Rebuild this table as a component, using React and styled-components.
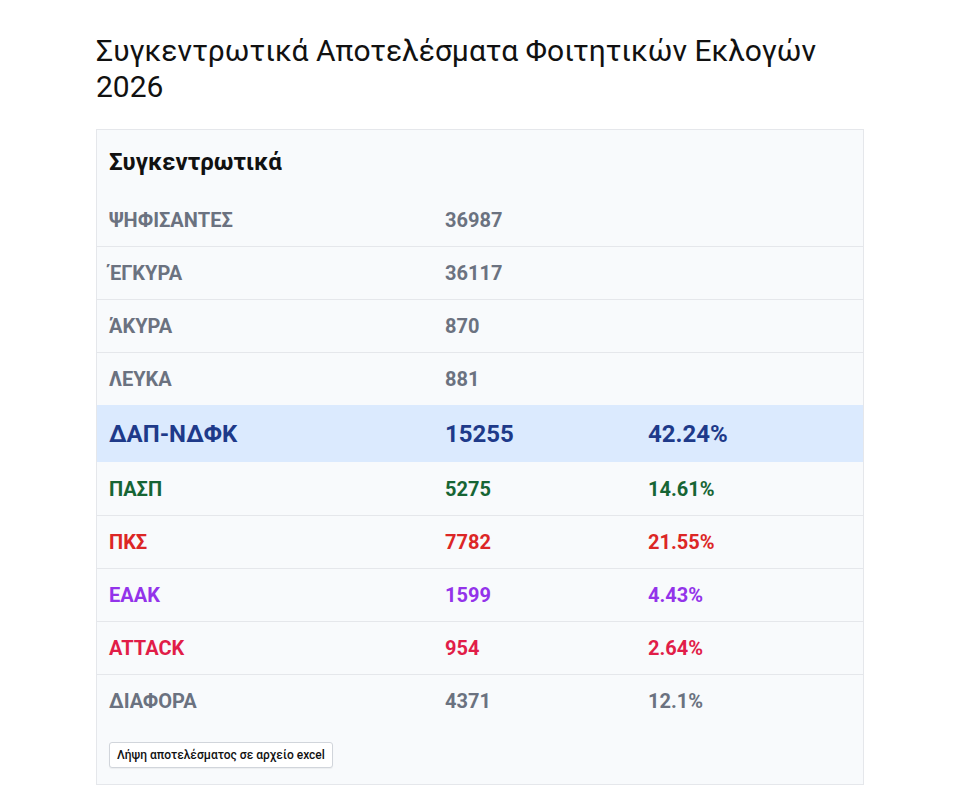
import React from "react";
import styled, { createGlobalStyle } from "styled-components";

const GlobalStyle = createGlobalStyle`
  body {
    margin: 0;
    background: #ffffff;
    font-family: Roboto, "Noto Sans", sans-serif;
    color: #111827;
  }
`;

const Page = styled.main`
  width: 768px;
  margin: 0 0 0 96px;
  padding-top: 33px;
`;

const Title = styled.h1`
  margin: 0 0 24px;
  font-size: 30px;
  line-height: 36px;
  font-weight: 400;
  color: #111;
`;

const Panel = styled.section`
  background: #f8fafc;
  border: 1px solid #e5e7eb;
`;

const PanelHeading = styled.h2`
  margin: 0;
  height: 63px;
  display: flex;
  align-items: center;
  padding: 0 12px;
  font-size: 24px;
  font-weight: 700;
  color: #111;
`;

const Row = styled.div`
  display: grid;
  grid-template-columns: 336px 203px 1fr;
  align-items: center;
  height: ${(p) => (p.$big ? 57 : 53)}px;
  padding: 0 12px;
  border-top: ${(p) => (p.$first || p.$big || p.$afterBig ? "none" : "1px solid #e5e7eb")};
  background: ${(p) => (p.$big ? "#dbeafe" : "transparent")};
  color: ${(p) => p.$color};
  font-size: ${(p) => (p.$big ? 24 : 20)}px;
  font-weight: 700;
  box-sizing: border-box;
`;

const Cell = styled.span``;

const Footer = styled.div`
  padding: 15px 12px 16px;
`;

const Button = styled.button`
  font-family: Roboto, sans-serif;
  font-size: 12px;
  font-weight: 500;
  color: #111;
  background: #fff;
  border: 1px solid #d1d5db;
  border-radius: 3px;
  padding: 5px 7px;
  box-shadow: 0 1px 1px rgba(0, 0, 0, 0.05);
`;

const rows = [
  { label: "ΨΗΦΙΣΑΝΤΕΣ", votes: "36987", pct: "", color: "#6b7280" },
  { label: "ΈΓΚΥΡΑ", votes: "36117", pct: "", color: "#6b7280" },
  { label: "ΆΚΥΡΑ", votes: "870", pct: "", color: "#6b7280" },
  { label: "ΛΕΥΚΑ", votes: "881", pct: "", color: "#6b7280" },
  { label: "ΔΑΠ-ΝΔΦΚ", votes: "15255", pct: "42.24%", color: "#1e3a8a", big: true },
  { label: "ΠΑΣΠ", votes: "5275", pct: "14.61%", color: "#166534" },
  { label: "ΠΚΣ", votes: "7782", pct: "21.55%", color: "#dc2626" },
  { label: "ΕΑΑΚ", votes: "1599", pct: "4.43%", color: "#9333ea" },
  { label: "ATTACK", votes: "954", pct: "2.64%", color: "#e11d48" },
  { label: "ΔΙΑΦΟΡΑ", votes: "4371", pct: "12.1%", color: "#6b7280" },
];

export default function App() {
  return (
    <>
      <GlobalStyle />
      <Page>
        <Title>Συγκεντρωτικά Αποτελέσματα Φοιτητικών Εκλογών 2026</Title>
        <Panel>
          <PanelHeading>Συγκεντρωτικά</PanelHeading>
          {rows.map((r, i) => (
            <Row
              key={r.label}
              $color={r.color}
              $big={r.big}
              $first={i === 0}
              $afterBig={i > 0 && rows[i - 1].big}
            >
              <Cell>{r.label}</Cell>
              <Cell>{r.votes}</Cell>
              <Cell>{r.pct}</Cell>
            </Row>
          ))}
          <Footer>
            <Button>Λήψη αποτελέσματος σε αρχείο excel</Button>
          </Footer>
        </Panel>
      </Page>
    </>
  );
}
